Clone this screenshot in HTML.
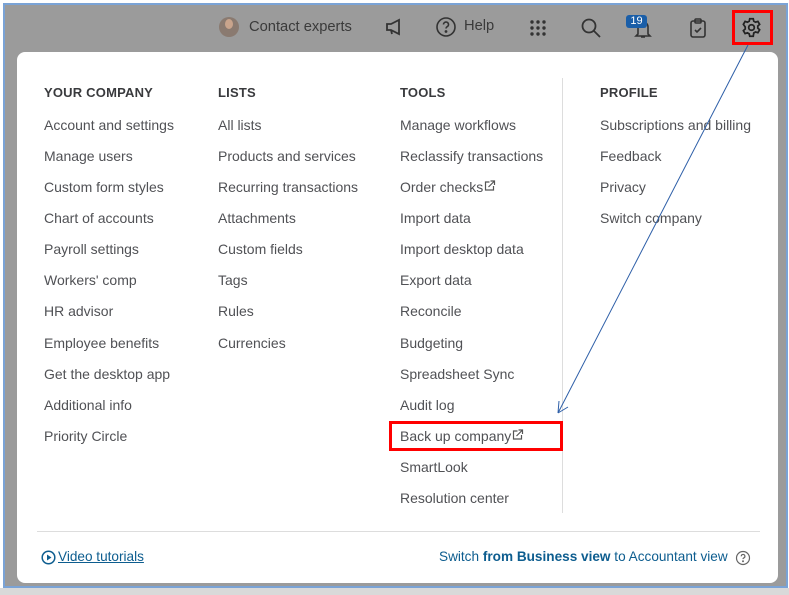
<!DOCTYPE html>
<html><head><style>
*{margin:0;padding:0;box-sizing:border-box}
body{width:789px;height:595px;overflow:hidden;background:#fff;font-family:"Liberation Sans",sans-serif;position:relative}
.frame{position:absolute;left:3px;top:3px;width:785px;height:585px;border:2px solid #7aa3d6;background:#9b9b9b}
.bottom{position:absolute;left:0;top:588px;width:789px;height:7px;background:#d9d9d9}
.panel{position:absolute;left:17px;top:52px;width:761px;height:531px;background:#fff;border-radius:8px}
.h{position:absolute;font-size:13px;font-weight:bold;color:#393a3d;letter-spacing:0.2px}
.i{position:absolute;font-size:14px;color:#505155;white-space:nowrap;line-height:16px}
.top{position:absolute;font-size:14.7px;color:#3a3a3a;top:19px}
.t{position:absolute;color:#0d5d8f;font-size:13.6px;top:549px}
</style></head><body>
<div class="frame"></div>
<div class="bottom"></div>
<div class="panel"></div>
<div style="position:absolute;left:219px;top:17px;width:20px;height:20px;border-radius:50%;background:#8a7a70"></div>
<div style="position:absolute;left:225px;top:19px;width:8px;height:10px;border-radius:50%;background:#c9a48c"></div>
<div class="top" style="left:249px">Contact experts</div>
<svg style="position:absolute;left:384px;top:17px" width="20" height="20" viewBox="0 0 20 20" fill="none" stroke="#333" stroke-width="1.8"><path d="M3 7h4l8-4v14l-8-4H3z M7 13l1 4"/></svg>
<svg style="position:absolute;left:435px;top:16px" width="22" height="22" viewBox="0 0 22 22" fill="none" stroke="#333" stroke-width="1.6"><circle cx="11" cy="11" r="9"/><path d="M8.5 8.5a2.5 2.5 0 1 1 3.5 2.3c-.7.4-1 .9-1 1.7"/><circle cx="11" cy="15.5" r=".6" fill="#333"/></svg>
<div class="top" style="left:464px;top:18px">Help</div>
<svg style="position:absolute;left:529px;top:19px" width="18" height="18" viewBox="0 0 18 18" fill="#333"><circle cx="3" cy="3" r="1.7"/><circle cx="9" cy="3" r="1.7"/><circle cx="15" cy="3" r="1.7"/><circle cx="3" cy="9" r="1.7"/><circle cx="9" cy="9" r="1.7"/><circle cx="15" cy="9" r="1.7"/><circle cx="3" cy="15" r="1.7"/><circle cx="9" cy="15" r="1.7"/><circle cx="15" cy="15" r="1.7"/></svg>
<svg style="position:absolute;left:580px;top:17px" width="22" height="22" viewBox="0 0 22 22" fill="none" stroke="#333" stroke-width="1.8"><circle cx="9" cy="9" r="6.5"/><path d="M14 14l6 6"/></svg>
<svg style="position:absolute;left:630px;top:16px" width="26" height="24" viewBox="0 0 26 24" fill="none" stroke="#333" stroke-width="1.6"><path d="M8 18V11a5 5 0 0 1 10 0v7l2 2H6z M11 21h4"/></svg>
<div style="position:absolute;left:626px;top:15px;width:21px;height:13px;background:#1a5ea8;border-radius:3px;color:#fff;font-size:11px;text-align:center;line-height:13px">19</div>
<svg style="position:absolute;left:688px;top:17px" width="20" height="22" viewBox="0 0 20 22" fill="none" stroke="#333" stroke-width="1.6"><rect x="3" y="4" width="14" height="16" rx="2"/><rect x="7" y="2" width="6" height="4" rx="1"/><path d="M7 13l2 2 4-4"/></svg>
<svg style="position:absolute;left:741px;top:17px" width="21" height="21" viewBox="0 0 24 24" fill="none" stroke="#222" stroke-width="2"><circle cx="12" cy="12" r="3.2"/><path d="M10 2h4l.6 2.8 2 1.1 2.7-.9 2 3.4-2.1 1.9v2.4l2.1 1.9-2 3.4-2.7-.9-2 1.1L14 22h-4l-.6-2.8-2-1.1-2.7.9-2-3.4 2.1-1.9v-2.4L2.7 8.4l2-3.4 2.7.9 2-1.1z"/></svg>
<div style="position:absolute;left:732px;top:10px;width:41px;height:35px;border:3px solid #f00"></div>
<div class="h" style="left:44px;top:85px">YOUR COMPANY</div>
<div class="h" style="left:218px;top:85px">LISTS</div>
<div class="h" style="left:400px;top:85px">TOOLS</div>
<div class="h" style="left:600px;top:85px">PROFILE</div>
<div style="position:absolute;left:562px;top:78px;width:1px;height:435px;background:#ddd"></div>

<div class="i" style="left:44px;top:117px">Account and settings</div>
<div class="i" style="left:44px;top:148px">Manage users</div>
<div class="i" style="left:44px;top:179px">Custom form styles</div>
<div class="i" style="left:44px;top:210px">Chart of accounts</div>
<div class="i" style="left:44px;top:241px">Payroll settings</div>
<div class="i" style="left:44px;top:272px">Workers' comp</div>
<div class="i" style="left:44px;top:303px">HR advisor</div>
<div class="i" style="left:44px;top:335px">Employee benefits</div>
<div class="i" style="left:44px;top:366px">Get the desktop app</div>
<div class="i" style="left:44px;top:397px">Additional info</div>
<div class="i" style="left:44px;top:428px">Priority Circle</div>

<div class="i" style="left:218px;top:117px">All lists</div>
<div class="i" style="left:218px;top:148px">Products and services</div>
<div class="i" style="left:218px;top:179px">Recurring transactions</div>
<div class="i" style="left:218px;top:210px">Attachments</div>
<div class="i" style="left:218px;top:241px">Custom fields</div>
<div class="i" style="left:218px;top:272px">Tags</div>
<div class="i" style="left:218px;top:303px">Rules</div>
<div class="i" style="left:218px;top:335px">Currencies</div>

<div class="i" style="left:400px;top:117px">Manage workflows</div>
<div class="i" style="left:400px;top:148px">Reclassify transactions</div>
<div class="i" style="left:400px;top:179px">Order checks<svg width="13" height="12" viewBox="0 0 12 12" fill="none" stroke="#555" stroke-width="1.2"><path d="M6 2H2v8h8V6 M7 1h4v4 M11 1L5 7"/></svg></div>
<div class="i" style="left:400px;top:210px">Import data</div>
<div class="i" style="left:400px;top:241px">Import desktop data</div>
<div class="i" style="left:400px;top:272px">Export data</div>
<div class="i" style="left:400px;top:303px">Reconcile</div>
<div class="i" style="left:400px;top:335px">Budgeting</div>
<div class="i" style="left:400px;top:366px">Spreadsheet Sync</div>
<div class="i" style="left:400px;top:397px">Audit log</div>
<div class="i" style="left:400px;top:428px">Back up company<svg width="13" height="12" viewBox="0 0 12 12" fill="none" stroke="#555" stroke-width="1.2"><path d="M6 2H2v8h8V6 M7 1h4v4 M11 1L5 7"/></svg></div>
<div class="i" style="left:400px;top:459px">SmartLook</div>
<div class="i" style="left:400px;top:490px">Resolution center</div>
<div style="position:absolute;left:389px;top:421px;width:174px;height:30px;border:3px solid #f00"></div>

<div class="i" style="left:600px;top:117px">Subscriptions and billing</div>
<div class="i" style="left:600px;top:148px">Feedback</div>
<div class="i" style="left:600px;top:179px">Privacy</div>
<div class="i" style="left:600px;top:210px">Switch company</div>

<div style="position:absolute;left:37px;top:531px;width:723px;height:1px;background:#ddd"></div>
<svg style="position:absolute;left:41px;top:550px" width="15" height="15" viewBox="0 0 15 15"><circle cx="7.5" cy="7.5" r="6.3" fill="none" stroke="#0d5d8f" stroke-width="1.5"/><path d="M6 4.5v6l4.5-3z" fill="#0d5d8f"/></svg>
<div class="t" style="left:58px;text-decoration:underline">Video tutorials</div>
<div class="t" style="left:439px">Switch <b>from Business view</b> to Accountant view</div>
<svg style="position:absolute;left:735px;top:550px" width="16" height="16" viewBox="0 0 16 16" fill="none" stroke="#666" stroke-width="1.2"><circle cx="8" cy="8" r="6.5"/><path d="M6.3 6.3a1.8 1.8 0 1 1 2.5 1.6c-.5.3-.8.6-.8 1.2"/><circle cx="8" cy="11.3" r=".4" fill="#666"/></svg>

<svg style="position:absolute;left:0;top:0" width="789" height="595"><path d="M748 45L558 413 M558 413l1-12 M558 413l10-6" stroke="#2e5fa8" stroke-width="1" fill="none"/></svg>
</body></html>
